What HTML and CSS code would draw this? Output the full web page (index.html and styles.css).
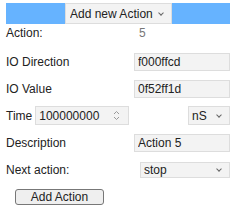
FILE: index.html
```html
<!DOCTYPE html>
<html lang="en">
<head>
    <meta charset="UTF-8">
    <title>Add Action</title>
    <link rel="stylesheet" href="styles.css">
</head>
<body>
    <div class="panel">
        <div class="topbar">
            <span class="pick mode">
                <select>
                    <option>Add new Action</option>
                </select>
            </span>
        </div>

        <div class="row first">
            <span class="label wide">Action:</span>
            <span class="num">5</span>
        </div>
        <div class="row">
            <span class="label">IO Direction</span>
            <input class="field" type="text" value="f000ffcd">
        </div>
        <div class="row">
            <span class="label">IO Value</span>
            <input class="field" type="text" value="0f52ff1d">
        </div>
        <div class="row">
            <span class="label">Time</span>
            <span class="spin">
                <input class="time" type="text" value="100000000">
                <svg class="arrows" width="7" height="11" viewBox="0 0 7 11">
                    <path d="M1 4 L3.5 1.5 L6 4 M1 7 L3.5 9.5 L6 7" fill="none" stroke="#999" stroke-width="1"/>
                </svg>
            </span>
            <span class="pick unit">
                <select>
                    <option>nS</option>
                </select>
            </span>
        </div>
        <div class="row">
            <span class="label">Description</span>
            <input class="field" type="text" value="Action 5">
        </div>
        <div class="row">
            <span class="label">Next action:</span>
            <span class="pick next">
                <select>
                    <option>stop</option>
                </select>
            </span>
        </div>
        <div class="row">
            <button class="btn">Add Action</button>
        </div>
    </div>
</body>
</html>
```

FILE: styles.css
```css
* {
    margin: 0;
    padding: 0;
    box-sizing: border-box;
}

body {
    font-family: 'Liberation Sans', Arial, sans-serif;
    font-size: 12px;
    color: #222;
    background-color: #fff;
}

.panel {
    width: 224px;
    margin: 3px 0 0 6px;
}

.topbar {
    height: 21px;
    background-color: #66b3ff;
    display: flex;
    align-items: center;
}

select,
input {
    font-family: 'Liberation Sans', Arial, sans-serif;
    font-size: 12px;
    color: #222;
    background-color: #f3f3f3;
    border: 1px solid #ddd;
    border-radius: 0;
    outline: none;
}

/* custom select with a thin chevron */
.pick {
    position: relative;
    display: inline-block;
}

.pick select {
    -webkit-appearance: none;
    appearance: none;
    width: 100%;
    height: 100%;
    padding-left: 3px;
}

.pick::after {
    content: '';
    position: absolute;
    right: 9px;
    top: 50%;
    width: 3px;
    height: 3px;
    margin-top: -3px;
    border-right: 1px solid #666;
    border-bottom: 1px solid #666;
    transform: rotate(45deg);
    pointer-events: none;
}

.mode {
    width: 107px;
    height: 21px;
    margin-left: 59px;
}

.mode select {
    padding-left: 4px;
}

.row {
    height: 27px;
    display: flex;
    align-items: center;
    justify-content: space-between;
}

.row.first {
    height: 18px;
    margin-bottom: 6px;
    justify-content: flex-start;
}

.label.wide {
    width: 133px;
}

.num {
    color: #777;
}

.field {
    width: 96px;
    height: 18px;
    padding: 0 3px;
}

.spin {
    position: relative;
    margin-left: 3px;
    margin-right: auto;
}

.time {
    display: block;
    width: 94px;
    height: 19px;
    padding: 0 3px;
}

.arrows {
    position: absolute;
    right: 9px;
    top: 4px;
}

.unit {
    width: 42px;
    height: 19px;
}

.next {
    width: 90px;
    height: 16px;
}

.btn {
    margin-left: 9px;
    width: 89px;
    height: 16px;
    font-family: 'Liberation Sans', Arial, sans-serif;
    font-size: 12px;
    color: #222;
    background-color: #efefef;
    border: 1px solid #777;
    border-radius: 3px;
}
```
